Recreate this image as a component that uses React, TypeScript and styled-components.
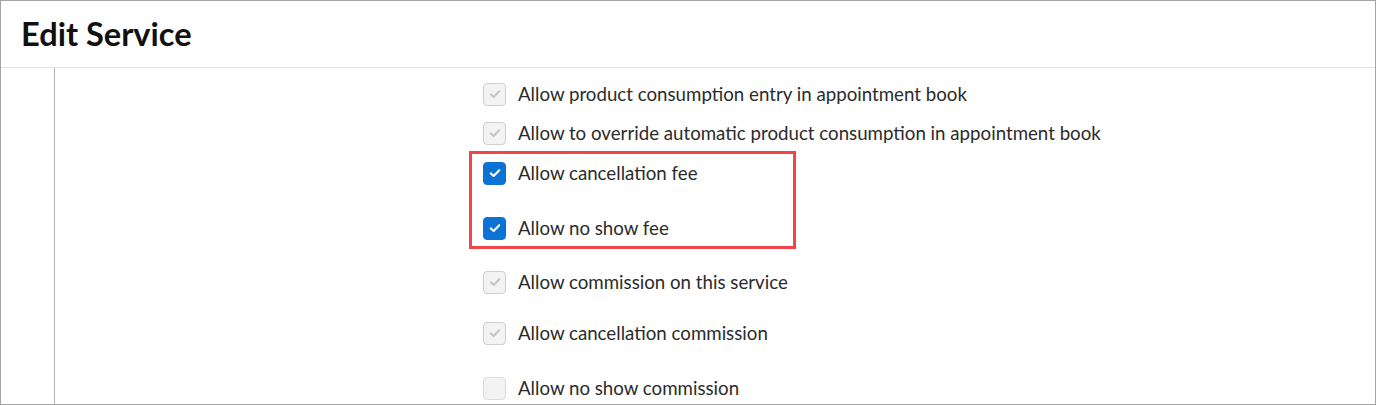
import React from "react";
import styled, { createGlobalStyle } from "styled-components";

const Global = createGlobalStyle`
  html, body { margin: 0; padding: 0; background: #fff; }
  body { font-family: Lato, "Noto Sans", sans-serif; }
`;

const Frame = styled.div`
  box-sizing: border-box;
  width: 1376px;
  height: 405px;
  border: 1px solid #a4a4a4;
  display: flex;
  flex-direction: column;
  overflow: hidden;
`;

const Header = styled.header`
  height: 66px;
  flex: none;
  border-bottom: 1px solid #e3e3e6;
  display: flex;
  align-items: center;
  padding-left: 20px;
`;

const Title = styled.h1`
  margin: 0;
  font-family: Lato, sans-serif;
  font-weight: 700;
  font-size: 32.6px;
  color: #111;
  position: relative;
  top: -1px;
`;

const Body = styled.div`
  flex: 1;
  display: flex;
`;

const Gutter = styled.div`
  width: 53px;
  flex: none;
  border-right: 1px solid #b4b4b4;
`;

const Content = styled.div`
  flex: 1;
  padding-left: 428px;
  padding-top: 14px;
  display: flex;
  flex-direction: column;
`;

const Highlight = styled.div`
  box-sizing: border-box;
  margin-left: -14px;
  width: 327px;
  border: 3px solid #f1454a;
  padding: 7px 0 6px 11px;
  display: flex;
  flex-direction: column;
  gap: 31px;
  margin-top: 6px;
`;

const Row = styled.label<{ $mt?: number }>`
  display: flex;
  align-items: center;
  gap: 12px;
  height: 24px;
  margin-top: ${(p) => p.$mt ?? 0}px;
  font-family: Lato, sans-serif;
  font-size: 18.7px;
  color: #2b2b2b;
  white-space: nowrap;
`;

type BoxKind = "checked" | "disabled" | "empty";

const Box = styled.span<{ $kind: BoxKind }>`
  box-sizing: border-box;
  width: 23px;
  height: 23px;
  flex: none;
  border-radius: 4px;
  display: flex;
  align-items: center;
  justify-content: center;
  background: ${(p) => (p.$kind === "checked" ? "#0a73d4" : "#f3f3f3")};
  border: 1px solid ${(p) => (p.$kind === "checked" ? "#0a73d4" : p.$kind === "empty" ? "#dcdcdc" : "#cfcfcf")};
`;

const Check = ({ color }: { color: string }) => (
  <svg width="14" height="14" viewBox="0 0 14 14">
    <path d="M2.8 7.4 L5.7 10 L11.2 4.2" fill="none" stroke={color} strokeWidth="2.1" strokeLinecap="round" strokeLinejoin="round" />
  </svg>
);

const Item = ({ kind, text, mt }: { kind: BoxKind; text: string; mt?: number }) => (
  <Row $mt={mt}>
    <Box $kind={kind}>
      {kind === "checked" && <Check color="#fff" />}
      {kind === "disabled" && <Check color="#c6c6c6" />}
    </Box>
    <span>{text}</span>
  </Row>
);

export default function App() {
  return (
    <>
      <Global />
      <Frame>
        <Header>
          <Title>Edit Service</Title>
        </Header>
        <Body>
          <Gutter />
          <Content>
            <Item kind="disabled" text="Allow product consumption entry in appointment book" />
            <Item kind="disabled" text="Allow to override automatic product consumption in appointment book" mt={15} />
            <Highlight>
              <Item kind="checked" text="Allow cancellation fee" />
              <Item kind="checked" text="Allow no show fee" />
            </Highlight>
            <Item kind="disabled" text="Allow commission on this service" mt={21} />
            <Item kind="disabled" text="Allow cancellation commission" mt={27} />
            <Item kind="empty" text="Allow no show commission" mt={31} />
          </Content>
        </Body>
      </Frame>
    </>
  );
}
